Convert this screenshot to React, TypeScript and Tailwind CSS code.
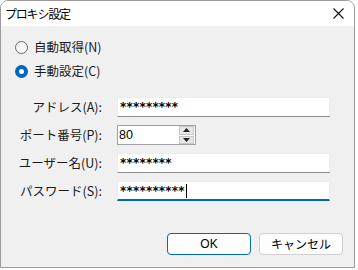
import React from 'react';

const font = { fontFamily: '"Noto Sans CJK JP", "Noto Sans", sans-serif' };

const Radio: React.FC<{ checked?: boolean; label: string }> = ({ checked, label }) => (
  <label className="flex items-center h-[24px] pl-[14px] gap-[6px]">
    {checked ? (
      <span className="w-[13px] h-[13px] rounded-full bg-[#0067c0] flex items-center justify-center">
        <span className="w-[5px] h-[5px] rounded-full bg-white" />
      </span>
    ) : (
      <span className="w-[13px] h-[13px] rounded-full border border-[#6b6b6b] bg-[#f7f7f7]" />
    )}
    <span className="text-[12.5px] leading-none text-[#1a1a1a]">{label}</span>
  </label>
);

const Field: React.FC<{ value: string; focused?: boolean }> = ({ value, focused }) => (
  <div
    className={
      'w-[213px] h-[20px] bg-white border border-[#ececec] flex items-center pl-[2px] ' +
      (focused ? 'border-b-2 border-b-[#0067c0]' : 'border-b-[#8a8a8a]')
    }
  >
    <span className="text-[12px] font-bold leading-none tracking-[0.2px] text-black" style={{ fontFamily: '"DejaVu Sans", sans-serif' }}>
      {value}
    </span>
    {focused && <span className="w-px h-[14px] bg-black ml-px" />}
  </div>
);

const Spin: React.FC = () => (
  <div className="w-[79px] h-[20px] bg-white border border-[#a0a0a0] flex items-center">
    <span className="flex-1 text-[12.5px] leading-none pl-[1px] text-black" style={{ fontFamily: '"Liberation Sans", sans-serif' }}>
      80
    </span>
    <div className="w-[15px] h-[18px] flex flex-col mr-px gap-px">
      <div className="flex-1 bg-[#e6e6e6] border border-[#c8c8c8] flex items-center justify-center">
        <svg width="7" height="4" viewBox="0 0 7 4"><path d="M0 4 L3.5 0 L7 4 Z" fill="#222" /></svg>
      </div>
      <div className="flex-1 bg-[#e6e6e6] border border-[#c8c8c8] flex items-center justify-center">
        <svg width="7" height="4" viewBox="0 0 7 4"><path d="M0 0 L3.5 4 L7 0 Z" fill="#222" /></svg>
      </div>
    </div>
  </div>
);

const Row: React.FC<{ label: string; children: React.ReactNode }> = ({ label, children }) => (
  <div className="flex items-center h-[20px]">
    <span className="w-[101px] text-right text-[12.5px] leading-none text-[#1a1a1a]">{label}</span>
    <div className="ml-[15px]">{children}</div>
  </div>
);

export default function App() {
  return (
    <div className="w-[358px] h-[270px] bg-white" style={font}>
      <div className="w-[355px] h-[268px] flex flex-col rounded-t-[8px] border border-[#9a9a9a] overflow-hidden">
        {/* Title bar */}
        <div className="h-[25px] bg-white flex items-center justify-between pl-[4px] pr-[10px]">
          <span className="text-[12px] leading-none text-black tracking-[-1.2px]">プロキシ設定</span>
          <svg width="11" height="11" viewBox="0 0 11 11">
            <path d="M0.5 0.5 L10.5 10.5 M10.5 0.5 L0.5 10.5" stroke="#111" strokeWidth="1.1" />
          </svg>
        </div>

        {/* Body */}
        <div className="flex-1 bg-[#f0f0f0] flex flex-col pt-[9px]">
          <Radio label="自動取得(N)" />
          <Radio checked label="手動設定(C)" />

          <div className="flex flex-col gap-[8px] mt-[14px]">
            <Row label="アドレス(A):">
              <Field value="*********" />
            </Row>
            <Row label="ポート番号(P):">
              <Spin />
            </Row>
            <Row label="ユーザー名(U):">
              <Field value="********" />
            </Row>
            <Row label="パスワード(S):">
              <Field value="**********" focused />
            </Row>
          </div>

          <div className="flex justify-end gap-[8px] mt-[32px] pr-[11px]">
            <button className="w-[84px] h-[22px] rounded-[4px] bg-[#fdfdfd] border border-[#0067c0] text-[12px] leading-none text-black" style={{ fontFamily: '"Liberation Sans", sans-serif' }}>
              OK
            </button>
            <button className="w-[84px] h-[22px] rounded-[4px] bg-[#fdfdfd] border border-[#d0d0d0] text-[12px] leading-none text-black">
              キャンセル
            </button>
          </div>
        </div>
      </div>
    </div>
  );
}
